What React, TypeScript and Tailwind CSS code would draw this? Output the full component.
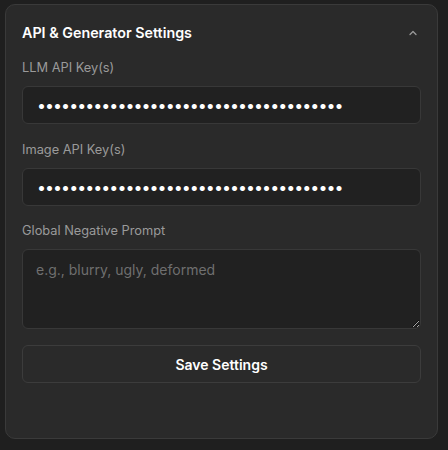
import React from "react";

export default function App() {
  const dots = "x".repeat(38);
  return (
    <div
      className="w-[448px] h-[450px] bg-[#1f1f1f] pt-[4px] pl-[5px]"
      style={{ fontFamily: "Inter, 'Noto Sans', sans-serif" }}
    >
      <div className="w-[433px] h-[435px] rounded-[10px] border border-[#3a3a3a] bg-[#2a2a2a] px-4 pt-[16px]">
        <div className="flex items-center justify-between h-[24px]">
          <h2 className="text-[14.3px] font-semibold text-white">API &amp; Generator Settings</h2>
          <svg width="12" height="12" viewBox="0 0 24 24" fill="none" stroke="#9a9a9a" strokeWidth="2.5" strokeLinecap="round" strokeLinejoin="round" className="mr-[2px]">
            <path d="M6 15l6-6 6 6" />
          </svg>
        </div>
        <div className="mt-[13px] flex flex-col">
          <label className="text-[12.8px] leading-[20px] text-[#9a9a9a]">LLM API Key(s)</label>
          <input
            type="password"
            readOnly
            value={dots}
            className="mt-2 h-[38px] w-full rounded-md border border-[#383838] bg-[#212121] px-[14px] text-[16px] tracking-[-0.96px] text-white outline-none"
          />
          <label className="mt-[16px] text-[12.8px] leading-[20px] text-[#9a9a9a]">Image API Key(s)</label>
          <input
            type="password"
            readOnly
            value={dots}
            className="mt-2 h-[38px] w-full rounded-md border border-[#383838] bg-[#212121] px-[14px] text-[16px] tracking-[-0.96px] text-white outline-none"
          />
          <label className="mt-[15px] text-[12.8px] leading-[20px] text-[#9a9a9a]">Global Negative Prompt</label>
          <textarea
            placeholder="e.g., blurry, ugly, deformed"
            className="mt-2 h-[80px] w-full rounded-md border border-[#383838] bg-[#212121] px-[13px] py-[9px] text-[14px] text-white placeholder:text-[#6f6f6f] outline-none"
          />
          <button className="mt-[16px] h-[38px] w-full rounded-md border border-[#3c3c3c] bg-[#2a2a2a] text-[14px] font-semibold text-white">
            Save Settings
          </button>
        </div>
      </div>
    </div>
  );
}
